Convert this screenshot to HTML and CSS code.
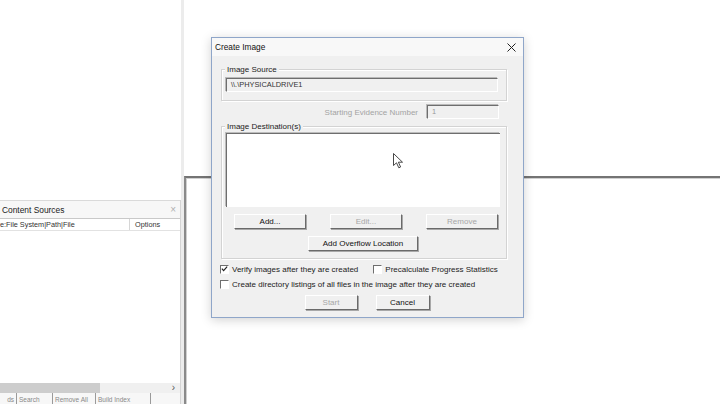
FILE: index.html
```html
<!DOCTYPE html>
<html lang="en">
  <head>
    <meta name="viewport" content="width=device-width, initial-scale=1.0" />
    <link rel="stylesheet" href="styles.css">
  </head>
  <body>
    <div class="desk">
      <div class="left-pane">
        <div class="sources">
          <div class="sources-head">
            <span>Content Sources</span>
            <span class="sources-x">×</span>
          </div>
          <div class="col-head">
            <div class="col-path">e:File System|Path|File</div>
            <div class="col-opt">Options</div>
          </div>
          <div class="sources-body"></div>
          <div class="hscroll">
            <div class="hthumb"></div>
            <div class="harrow">›</div>
          </div>
          <div class="tabs">
            <div class="tab t1">ds</div>
            <div class="tab t2">Search</div>
            <div class="tab t3">Remove All</div>
            <div class="tab t4">Build Index</div>
          </div>
        </div>
      </div>

      <div class="right-pane"></div>

      <div class="dialog">
        <div class="titlebar">
          <span class="title">Create Image</span>
          <svg class="close" width="9" height="9" viewBox="0 0 9 9">
            <path d="M0.5 0.5 L8.5 8.5 M8.5 0.5 L0.5 8.5" stroke="#222" stroke-width="1" fill="none" />
          </svg>
        </div>

        <div class="dialog-body">
          <div class="group source">
            <div class="group-label">Image Source</div>
            <div class="field wide">\\.\PHYSICALDRIVE1</div>
          </div>

          <div class="evidence">
            <span class="disabled-label">Starting Evidence Number</span>
            <div class="field num">1</div>
          </div>

          <div class="group dest">
            <div class="group-label">Image Destination(s)</div>
            <div class="listbox">
              <svg class="cursor" width="11" height="16" viewBox="0 0 11 16">
                <path d="M0.5 0.5 L0.5 12.5 L3.5 9.8 L5.8 14.8 L7.6 14 L5.4 9.2 L9.5 9.2 Z" fill="#fff" stroke="#333" stroke-width="0.9" stroke-linejoin="round" />
              </svg>
            </div>
            <div class="btn-row">
              <div class="btn w72">Add...</div>
              <div class="btn w72 off">Edit...</div>
              <div class="btn w72 off">Remove</div>
            </div>
            <div class="btn-row center">
              <div class="btn w110">Add Overflow Location</div>
            </div>
          </div>

          <div class="checks">
            <div class="check-row">
              <label class="check">
                <span class="box on">
                  <svg width="8" height="8" viewBox="0 0 8 8">
                    <path d="M1 3.5 L3 5.8 L7 1.2" stroke="#222" stroke-width="1.4" fill="none" />
                  </svg>
                </span>
                Verify images after they are created
              </label>
              <label class="check">
                <span class="box"></span>
                Precalculate Progress Statistics
              </label>
            </div>
            <div class="check-row">
              <label class="check">
                <span class="box"></span>
                Create directory listings of all files in the image after they are created
              </label>
            </div>
          </div>

          <div class="btn-row center bottom">
            <div class="btn w53 off">Start</div>
            <div class="btn w54">Cancel</div>
          </div>
        </div>
      </div>
    </div>
  </body>
</html>
```

FILE: styles.css
```css
* {
  box-sizing: border-box;
}

html,
body {
  margin: 0;
  padding: 0;
  background-color: #fff;
  font-family: "Liberation Sans", Arial, sans-serif;
  color: #1a1a1a;
}

.desk {
  position: relative;
  width: 720px;
  height: 404px;
  overflow: hidden;
  background-color: #fff;
}

/* background windows */
.left-pane {
  position: absolute;
  left: 0;
  top: 0;
  width: 184px;
  height: 404px;
  border-right: 3px solid #ececec;
  display: flex;
  flex-direction: column;
  justify-content: flex-end;
}

.sources {
  height: 204px;
  width: 181px;
  border-right: 1px solid #d4d4d4;
  display: flex;
  flex-direction: column;
  background-color: #fff;
}

.sources-head {
  height: 19px;
  display: flex;
  align-items: center;
  justify-content: space-between;
  padding: 0 4px 0 2px;
  font-size: 8.4px;
  color: #222;
  background-color: #f7f7f7;
  border-top: 1px solid #dadada;
  border-bottom: 1px solid #c9c9c9;
}

.sources-x {
  color: #b0b0b0;
  font-size: 10px;
}

.col-head {
  height: 12px;
  display: flex;
  font-size: 7.3px;
  color: #333;
  border-bottom: 1px solid #e2e2e2;
  background-color: #fff;
}

.col-path {
  width: 130px;
  border-right: 1px solid #d6d6d6;
  line-height: 11px;
  white-space: nowrap;
  overflow: hidden;
}

.col-opt {
  padding-left: 5px;
  line-height: 11px;
}

.sources-body {
  flex: 1;
  background-color: #fff;
}

.hscroll {
  height: 10px;
  display: flex;
  align-items: center;
  background-color: #f0f0f0;
}

.hthumb {
  width: 100px;
  height: 10px;
  background-color: #cdcdcd;
}

.harrow {
  margin-left: auto;
  margin-right: 5px;
  font-size: 10px;
  line-height: 10px;
  color: #555;
}

.tabs {
  height: 11px;
  display: flex;
  background-color: #f7f7f7;
  font-size: 6.5px;
  color: #888;
  overflow: hidden;
}

.tab {
  border-right: 1px solid #9a9a9a;
  padding: 3px 2px 0;
  white-space: nowrap;
  overflow: hidden;
}

.t1 { width: 17px; text-align: right; }
.t2 { width: 36px; }
.t3 { width: 43px; }
.t4 { width: 55px; }

.right-pane {
  position: absolute;
  left: 184px;
  top: 176px;
  right: 0;
  bottom: 0;
  border-top: 2px solid #747474;
  border-left: 2px solid #8a8a8a;
  box-shadow: inset 1px 1px 0 #d0d0d0;
}

/* the dialog */
.dialog {
  position: absolute;
  left: 211px;
  top: 37px;
  width: 313px;
  height: 281px;
  border: 1px solid #8fa6c9;
  background-color: #f0f0f0;
  box-shadow: 0 2px 10px rgba(0, 0, 0, 0.18);
  font-size: 8px;
  display: flex;
  flex-direction: column;
}

.titlebar {
  height: 18px;
  flex: none;
  display: flex;
  align-items: center;
  justify-content: space-between;
  padding: 0 7px 0 3px;
  background-color: #f8f8f8;
}

.title {
  font-size: 8.3px;
  color: #111;
}

.dialog-body {
  padding: 0 16px 0 9px;
  display: flex;
  flex-direction: column;
  color: #222;
}

.group {
  border: 1px solid #d3d3d3;
  box-shadow: 1px 1px 0 #fff, inset 1px 1px 0 #fff;
}

.group-label {
  width: fit-content;
  height: 9px;
  line-height: 9px;
  margin: -5px 0 0 -1px;
  padding: 0 2px;
  background-color: #f0f0f0;
  white-space: nowrap;
}

.source {
  margin-top: 13px;
  height: 32px;
  padding: 0 8px 0 4px;
}

.field {
  height: 14px;
  line-height: 12px;
  padding-left: 4px;
  border-top: 1px solid #6e6e6e;
  border-left: 1px solid #6e6e6e;
  border-bottom: 1px solid #fff;
  border-right: 1px solid #fff;
  box-shadow: -1px -1px 0 #b9b9b9;
  font-size: 7.4px;
  color: #333;
}

.wide {
  margin-top: 4px;
}

.evidence {
  height: 14px;
  margin-top: 4px;
  display: flex;
  align-items: center;
  justify-content: flex-end;
  padding-right: 8px;
  gap: 9px;
}

.disabled-label {
  color: #a3a3a3;
}

.num {
  width: 72px;
  color: #999;
}

.dest {
  margin-top: 7px;
  height: 133px;
  padding: 0 6px 0 4px;
}

.listbox {
  position: relative;
  height: 74px;
  margin-top: 2px;
  background-color: #fff;
  border-top: 1px solid #6e6e6e;
  border-left: 1px solid #6e6e6e;
  box-shadow: -1px -1px 0 #bdbdbd;
}

.cursor {
  position: absolute;
  left: 166px;
  top: 19px;
}

.btn-row {
  display: flex;
  gap: 24px;
  padding-left: 8px;
  margin-top: 7px;
}

.btn-row.center {
  justify-content: center;
  padding-left: 0;
}

.btn {
  height: 15px;
  line-height: 13px;
  text-align: center;
  background-color: #f0f0f0;
  border-top: 1px solid #fff;
  border-left: 1px solid #fff;
  border-right: 1px solid #6a6a6a;
  border-bottom: 1px solid #6a6a6a;
  box-shadow: 1px 1px 0 #a8a8a8;
  color: #111;
}

.btn.off {
  color: #a6a6a6;
}

.w72 { width: 72px; }
.w110 { width: 110px; }
.w53 { width: 53px; }
.w54 { width: 54px; }

.checks {
  margin-top: 5px;
  margin-left: -1px;
  display: flex;
  flex-direction: column;
  gap: 5px;
}

.check-row {
  display: flex;
  gap: 15px;
}

.check {
  display: flex;
  align-items: center;
  gap: 3px;
  white-space: nowrap;
  height: 10px;
}

.box {
  width: 9px;
  height: 9px;
  background-color: #fff;
  border-top: 1px solid #6e6e6e;
  border-left: 1px solid #6e6e6e;
  border-right: 1px solid #fff;
  border-bottom: 1px solid #fff;
  display: flex;
  align-items: center;
  justify-content: center;
}

.box svg {
  display: block;
}

.btn-row.bottom {
  gap: 18px;
  margin-top: 6px;
  margin-left: 6px;
}
```
